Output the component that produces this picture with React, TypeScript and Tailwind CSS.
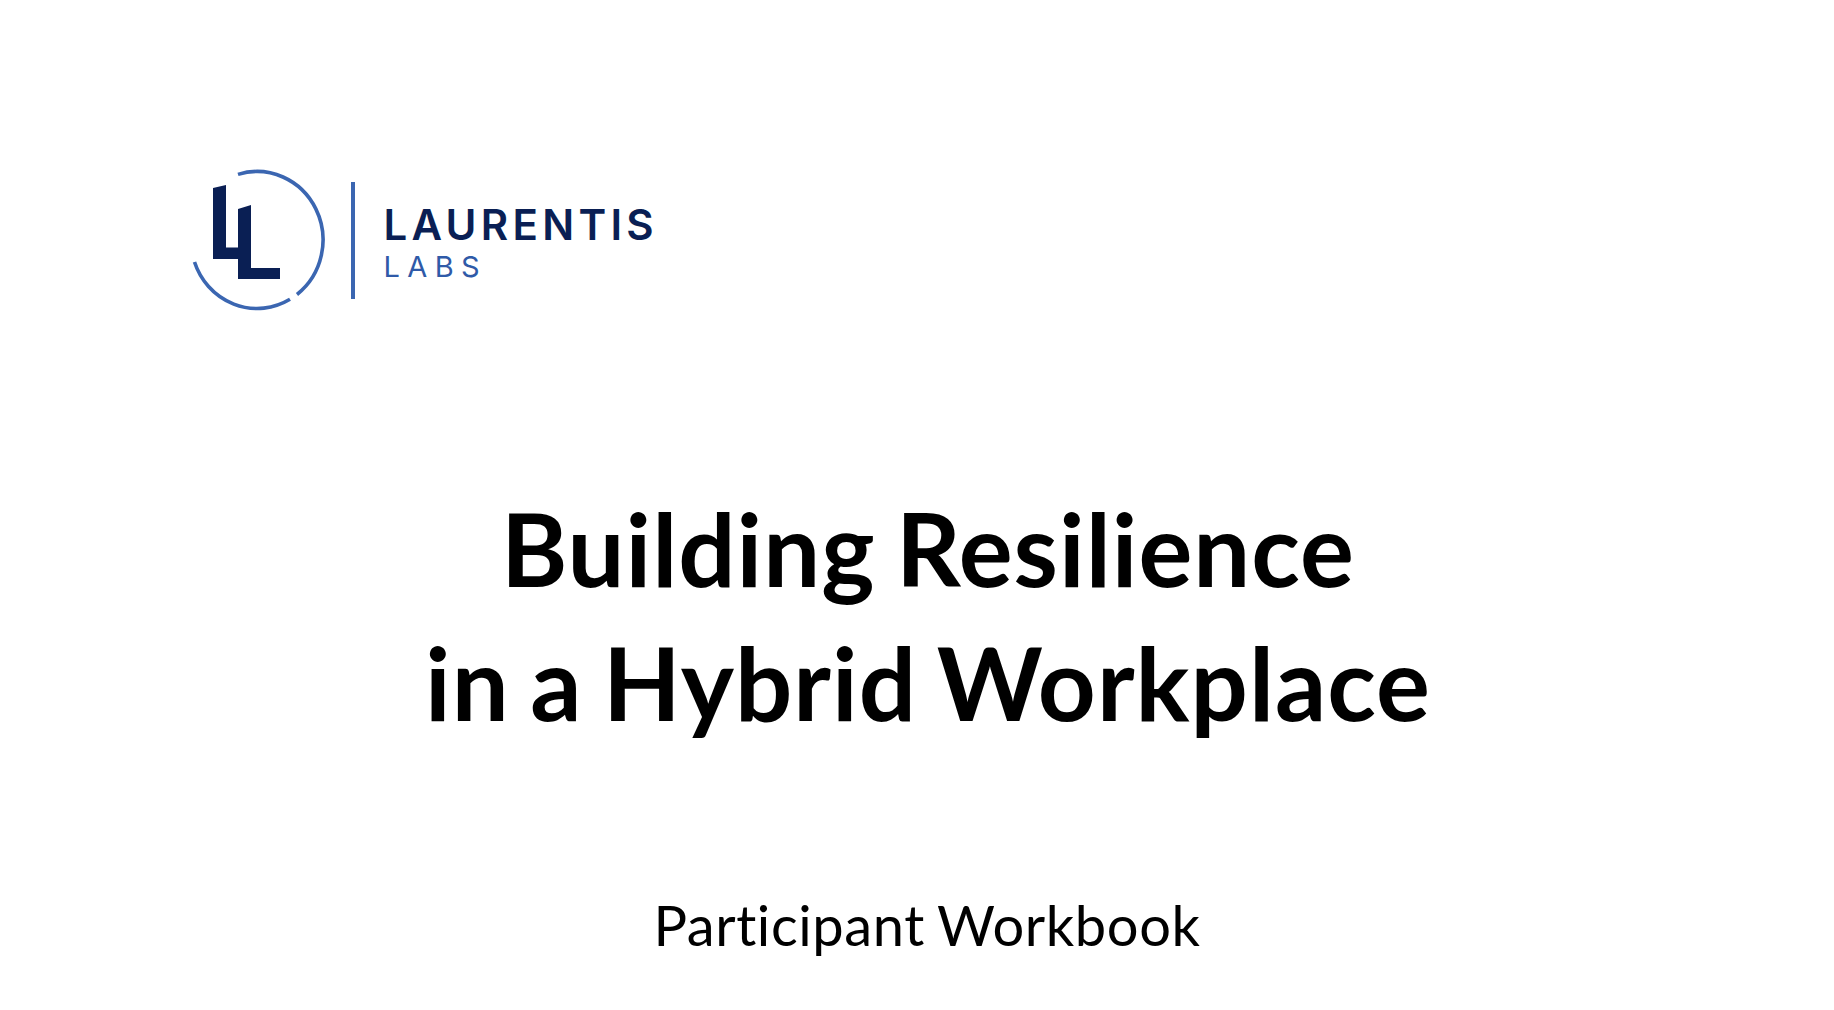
export default function App() {
  return (
    <div className="h-[1010px] w-full overflow-hidden bg-white font-['Lato',sans-serif] text-black [font-variant-ligatures:none]">
      <div className="flex items-center pl-[190px] pt-[165px]">
        <svg width="140" height="150" viewBox="190 165 140 150" className="shrink-0">
          <path d="M238 174.4A66 68.5 0 0 1 297 294.5" fill="none" stroke="#3b66b1" strokeWidth="3.6" />
          <path d="M290 299.3A66 68.5 0 0 1 194.5 262" fill="none" stroke="#3b66b1" strokeWidth="3.6" />
          <path d="M213 188L226 185V247.5H238V209L251 205V268H280V279H238V259H213Z" fill="#0a1f54" />
        </svg>
        <div className="ml-[21px] h-[117px] w-[3.5px] bg-[#3b66b1]" />
        <div className="ml-[29px] flex flex-col pt-[6px] font-['Inter',sans-serif]">
          <span className="text-[42px] font-semibold leading-[44px] tracking-[4.3px] text-[#0a1f54]">LAURENTIS</span>
          <span className="mt-[3px] text-[29px] font-normal leading-[34px] tracking-[7.4px] text-[#2f5aa8]">LABS</span>
        </div>
      </div>
      <div className="mt-[166px] flex flex-col items-center pl-[22px]">
        <h1 className="text-center text-[101px] font-bold leading-[134px] tracking-[1px] text-black [word-spacing:-5px]">
          <div>Building Resilience</div>
          <div>in a Hybrid Workplace</div>
        </h1>
        <p className="mt-[141px] mr-[2px] text-[56px] font-normal leading-[70px] tracking-[0.6px] text-black [word-spacing:-2px]">Participant Workbook</p>
      </div>
    </div>
  );
}
